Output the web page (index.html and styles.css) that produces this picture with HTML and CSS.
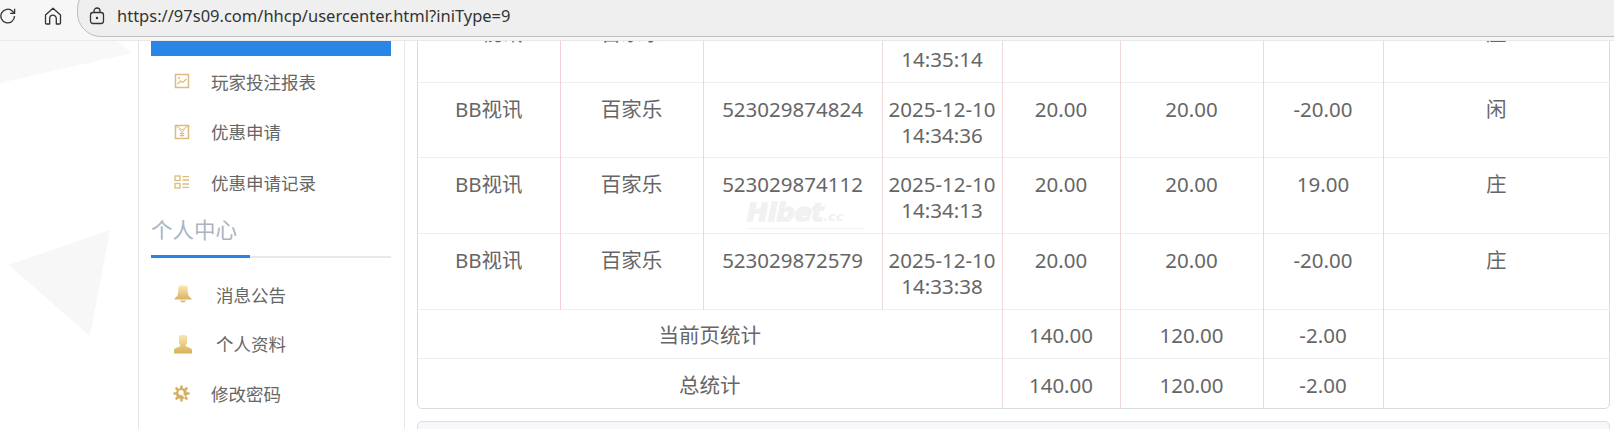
FILE: index.html
```html
<!DOCTYPE html>
<html lang="zh-CN">
<head>
    <meta charset="utf-8">
    <title>usercenter</title>
    <link rel="stylesheet" href="styles.css">
</head>
<body>
    <div class="toolbar">
        <svg class="tb-reload" width="18" height="18" viewBox="0 0 18 18"><path d="M15.500 9a6.800 6.800 0 1 1-2-4.800L15.500 6.200M15.600 1.800v4.500h-4.500" fill="none" stroke="#333" stroke-width="1.300"/></svg>
        <svg class="tb-home" width="18" height="18" viewBox="0 0 18 18"><path d="M1.500 8 9 1.200 16.500 8v8a1 1 0 0 1-1 1h-3.200v-5.500a3.300 3.300 0 0 0-6.600 0V17H2.500a1 1 0 0 1-1-1z" fill="none" stroke="#333" stroke-width="1.300" stroke-linejoin="round"/></svg>
        <div class="urlbar">
            <svg class="tb-lock" width="16" height="18" viewBox="0 0 16 18"><rect x="1.500" y="5.500" width="13" height="11" rx="2.500" fill="none" stroke="#333" stroke-width="1.300"/><path d="M5 5.500V4a3 3 0 0 1 6 0v1.500" fill="none" stroke="#333" stroke-width="1.300"/><circle cx="8" cy="11" r="1.200" fill="#333"/></svg>
            <span class="url">https://97s09.com/hhcp/usercenter.html?iniType=9</span>
        </div>
    </div>

    <div class="page">
        <svg class="bg-shapes" width="139" height="388" viewBox="0 0 139 388">
            <path d="M0 0H117L132 12 0 42z" fill="#f8f8f8"/>
            <path d="M8.600 224 110 189 90 295z" fill="#f7f7f7"/>
        </svg>

        <div class="sidebar">
            <div class="active-bar"></div>
            <a class="nav-item">
                <svg class="nav-icon" width="16" height="16" viewBox="0 0 16 16"><rect x="1.500" y="1.500" width="13" height="13" fill="none" stroke="#dcbb7c" stroke-width="1.500"/><circle cx="5" cy="5" r="1.100" fill="#dcbb7c"/><path d="M3.500 11 6.500 8l2 1.500L12.500 6" fill="none" stroke="#dcbb7c" stroke-width="1.200"/></svg>
                <span>玩家投注报表</span>
            </a>
            <a class="nav-item">
                <svg class="nav-icon" width="16" height="16" viewBox="0 0 16 16"><rect x="1.500" y="1.500" width="13" height="13" fill="none" stroke="#dcbb7c" stroke-width="1.500"/><path d="M2 2 8 6l6-4M5.500 5.500 8 8.500l2.500-3M8 8.500V13M5.800 9.500h4.400M5.800 11.500h4.400" fill="none" stroke="#dcbb7c" stroke-width="1"/></svg>
                <span>优惠申请</span>
            </a>
            <a class="nav-item">
                <svg class="nav-icon" width="16" height="16" viewBox="0 0 16 16"><g fill="none" stroke="#dcbb7c" stroke-width="1.300"><rect x="1" y="2" width="5" height="4.500"/><rect x="1" y="9.500" width="5" height="4.500"/><path d="M8.500 2.600H15M8.500 6H15M8.500 10H15M8.500 13.400H15"/></g></svg>
                <span>优惠申请记录</span>
            </a>

            <div class="section-title">个人中心</div>

            <a class="nav-item nav-wide">
                <svg class="nav-icon" width="20" height="20" viewBox="0 0 20 20"><defs><linearGradient id="gold" x1="0" y1="0" x2="0" y2="1"><stop offset="0" stop-color="#fbe7b2"/><stop offset="1" stop-color="#d8b25e"/></linearGradient></defs><path d="M7 1.500h6a1.500 1.500 0 0 1 1.500 1.500l.5 7c.3 2 2 3 3.500 4.500v1H1.500v-1C3 13 4.700 12 5 10l.5-7A1.500 1.500 0 0 1 7 1.500z" fill="url(#gold)"/><path d="M7 16.500h6c0 2.500-6 2.500-6 0z" fill="#dcbb6e"/></svg>
                <span>消息公告</span>
            </a>
            <a class="nav-item nav-wide">
                <svg class="nav-icon" width="20" height="20" viewBox="0 0 20 20"><defs><linearGradient id="gold2" x1="0" y1="0" x2="0" y2="1"><stop offset="0" stop-color="#fbe7b2"/><stop offset="1" stop-color="#d6b058"/></linearGradient></defs><path d="M7.500 1h5A1.500 1.500 0 0 1 14 2.500V8c0 2-1.300 3-1.300 4 0 1 6.300 1.500 6.300 4v3.500H1V16c0-2.500 6.300-3 6.300-4 0-1-1.300-2-1.300-4V2.500A1.500 1.500 0 0 1 7.500 1z" fill="url(#gold2)"/></svg>
                <span>个人资料</span>
            </a>
            <a class="nav-item nav-gear">
                <svg class="nav-icon" width="17" height="17" viewBox="0 0 17 17"><g stroke="#d5b062" stroke-width="2.600" stroke-linecap="round"><path d="M8.500 1.500v14M1.500 8.500h14M3.500 3.500l10 10M13.500 3.500l-10 10"/></g><circle cx="8.500" cy="8.500" r="5.500" fill="#d5b062"/><circle cx="8" cy="7.500" r="2.600" fill="#fff"/><path d="M9.500 9.500l2.500 2.500" stroke="#fff" stroke-width="1.600"/></svg>
                <span>修改密码</span>
            </a>
        </div>

        <div class="main">
            <div class="card">
                <div class="watermark">Hibet<small>.cc</small></div>
                <table class="records">
                    <colgroup>
                        <col class="c-venue"><col class="c-game"><col class="c-no"><col class="c-time">
                        <col class="c-bet"><col class="c-valid"><col class="c-win"><col class="c-result">
                    </colgroup>
                    <tr>
                        <td>BB视讯</td><td>百家乐</td><td></td><td>2025-12-10<br>14:35:14</td>
                        <td></td><td></td><td></td><td>庄</td>
                    </tr>
                    <tr>
                        <td>BB视讯</td><td>百家乐</td><td>523029874824</td><td>2025-12-10<br>14:34:36</td>
                        <td>20.00</td><td>20.00</td><td>-20.00</td><td>闲</td>
                    </tr>
                    <tr>
                        <td>BB视讯</td><td>百家乐</td><td>523029874112</td><td>2025-12-10<br>14:34:13</td>
                        <td>20.00</td><td>20.00</td><td>19.00</td><td>庄</td>
                    </tr>
                    <tr>
                        <td>BB视讯</td><td>百家乐</td><td>523029872579</td><td>2025-12-10<br>14:33:38</td>
                        <td>20.00</td><td>20.00</td><td>-20.00</td><td>庄</td>
                    </tr>
                    <tr class="sum">
                        <td colspan="4">当前页统计</td><td>140.00</td><td>120.00</td><td>-2.00</td><td></td>
                    </tr>
                    <tr class="sum">
                        <td colspan="4">总统计</td><td>140.00</td><td>120.00</td><td>-2.00</td><td></td>
                    </tr>
                </table>
            </div>
            <div class="next-card"></div>
        </div>
    </div>
</body>
</html>
```

FILE: styles.css
```css
body {
    margin: 0;
    height: 429px;
    overflow: hidden;
    display: flex;
    flex-direction: column;
    background-color: #fff;
    font-family: "Noto Sans", "Noto Sans CJK SC", sans-serif;
    color: #666;
}

/* browser bar */
.toolbar {
    flex: 0 0 41px;
    box-sizing: border-box;
    height: 41px;
    display: flex;
    align-items: flex-start;
    background-color: #f7f7f7;
    border-bottom: 1px solid #e9e9e9;
    overflow: hidden;
}
.tb-reload {
    flex: none;
    margin: 7px 0 0 -1px;
}
.tb-home {
    flex: none;
    margin: 7px 0 0 27px;
}
.urlbar {
    flex: 1;
    display: flex;
    align-items: center;
    height: 50px;
    margin: -15px -40px 0 15px;
    padding: 0 0 0 11px;
    background-color: #efefef;
    border: 1px solid #bdbdbd;
    border-radius: 24px;
}
.tb-lock {
    flex: none;
    margin-top: 10px;
}
.url {
    margin: 8px 0 0 12px;
    font-size: 16.500px;
    color: #333;
}

/* page */
.page {
    flex: 1;
    position: relative;
    display: flex;
    align-items: flex-start;
    min-height: 0;
    overflow: hidden;
    padding-left: 138px;
}
.bg-shapes {
    position: absolute;
    left: 0;
    top: 0;
}

/* left menu */
.sidebar {
    position: relative;
    flex: none;
    box-sizing: border-box;
    width: 267px;
    height: 400px;
    padding: 0 13px 0 12px;
    background-color: #fff;
    border-left: 1px solid #e3e3e3;
    border-right: 1px solid #e8e8e8;
}
.active-bar {
    height: 15px;
    background-color: #2a86e6;
}
.nav-item {
    display: flex;
    align-items: center;
    height: 50.500px;
    font-size: 17.500px;
    color: #666;
}
.nav-icon {
    flex: none;
    margin-left: 23px;
    margin-right: 21px;
}
.nav-wide {
    height: 49.500px;
}
.nav-wide .nav-icon {
    margin-left: 22px;
    margin-right: 23px;
}
.nav-gear {
    height: 49.500px;
}
.nav-gear .nav-icon {
    margin-left: 22px;
    margin-right: 21px;
}
.section-title {
    position: relative;
    box-sizing: border-box;
    height: 50px;
    margin-bottom: 12px;
    padding-top: 8.500px;
    line-height: 28px;
    font-size: 21.500px;
    color: #a9b5c4;
    border-bottom: 2px solid #e8e8e8;
}
.section-title::after {
    content: "";
    position: absolute;
    left: 0;
    bottom: -2px;
    width: 99px;
    height: 3px;
    background-color: #2a86e6;
}

/* table */
.main {
    flex: none;
    width: 1193px;
    margin-left: 12px;
    margin-top: -35px;
}
.card {
    position: relative;
    border: 1px solid #d9dcdf;
    border-radius: 5px;
    overflow: hidden;
}
.records {
    width: 1191px;
    table-layout: fixed;
    border-collapse: collapse;
    font-size: 20.500px;
    line-height: 26px;
    text-align: center;
    color: #666;
}
.c-venue { width: 142px; }
.c-game { width: 143px; }
.c-no { width: 179px; }
.c-time { width: 120px; }
.c-bet { width: 118px; }
.c-valid { width: 143px; }
.c-win { width: 120px; }
.records td {
    box-sizing: border-box;
    height: 75.700px;
    padding: 13px 0 8px;
    vertical-align: top;
    border-top: 1px solid #eee;
    border-left: 1px solid #f0d8d8;
}
.records tr:first-child td {
    border-top: 0;
    height: 75px;
}
.records td:first-child {
    border-left: 0;
}
.records td:nth-child(2) {
    border-left-color: #f6d0d6;
}
.records .sum td {
    height: 49.500px;
    padding: 12px 0 10px;
}
.records .sum td:nth-child(2) {
    border-left-color: #f0d8d8;
}
.records .sum:last-child td {
    padding-top: 13px;
}
.watermark {
    position: absolute;
    left: 329px;
    top: 194px;
    width: 118px;
    font-family: "DejaVu Sans", sans-serif;
    font-size: 25px;
    font-weight: bold;
    font-style: italic;
    line-height: 23px;
    color: #f1f1f1;
    -webkit-text-stroke: 1.500px #f1f1f1;
    border-bottom: 1px solid #f1f1f1;
}
.watermark small {
    font-size: 13px;
    -webkit-text-stroke: 0;
}
.next-card {
    height: 60px;
    margin-top: 12px;
    background-color: #f5f7fa;
    border: 1px solid #d9dde3;
    border-radius: 5px;
}
```
